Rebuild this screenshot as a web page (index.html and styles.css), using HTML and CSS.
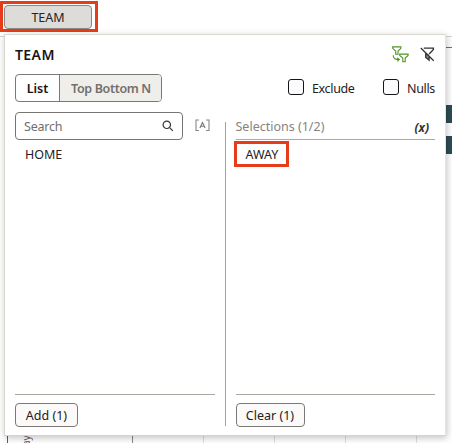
FILE: index.html
```
<!DOCTYPE html>
<html lang="en">
<head>
<meta charset="utf-8">
<title>Team filter</title>
<link rel="stylesheet" href="styles.css">
</head>
<body>
<div class="page">
  <header class="filter-bar"><div class="callout"><button class="chip"><span>TEAM</span></button></div></header>
  <main class="canvas">
    <div class="bars"><i></i><i></i></div>
    <div class="chart-foot"><span class="axis-label">ay</span><i class="g1"></i><i></i><i></i><i></i><i></i></div>
  </main>
  <section class="popup">
    <div class="head">
      <h1>TEAM</h1>
      <svg class="ic-link" width="17" height="17" viewBox="0 0 17 17"><path d="M.7 .9h8.2v1.4L6 5v3.2H3.7V5L.7 2.3zM7.7 8.1h8.4v1.3L13.2 12v3.8h-2.4V12L7.7 9.4zM1.2 9.2c0 2.9 1.8 4.4 5.9 4.4M5.3 11.8l2 1.8-2 1.8"/></svg>
      <svg class="ic-clear" width="15" height="15" viewBox="0 0 15 15"><path class="shade" d="M5.8 7h3v5.5l-3-2z"/><path d="M3.8 1.2h9.6v1.2L9.2 7M5.7 6.5v4l3.4 2.6V9.5M.8 1l12.9 12.8"/></svg>
    </div>
    <div class="options">
      <div class="toggle"><b class="on">List</b><b class="off">Top Bottom N</b></div>
      <label class="check exclude"><i></i><span>Exclude</span></label>
      <label class="check nulls"><i></i><span>Nulls</span></label>
    </div>
    <div class="columns">
      <div class="col">
        <div class="search-row">
          <div class="search"><span>Search</span><svg width="12" height="12" viewBox="0 0 12 12"><circle cx="4.8" cy="4.8" r="3.7"/><path d="M7.6 7.6l3.2 3.2"/></svg></div>
          <svg class="ic-match" width="15" height="13" viewBox="0 0 15 13"><path d="M4 1H1v10.5h3M11 1h3v10.5h-3"/><path class="a" d="M4.9 9L7.5 3.5 10.1 9M5.8 7.2h3.4"/></svg>
        </div>
        <div class="list"><div class="item">HOME</div></div>
        <button class="btn add"><span>Add (1)</span></button>
      </div>
      <div class="divider"></div>
      <div class="col right">
        <div class="sel-head"><span>Selections (1/2)</span><b>(x)</b></div>
        <div class="list"><div class="item callout-item">AWAY</div></div>
        <button class="btn clear"><span>Clear (1)</span></button>
      </div>
    </div>
  </section>
</div>
</body>
</html>
```
FILE: styles.css
```
* { box-sizing: border-box; }
body { margin: 0; background: #fff; color: #24211f; font: 12.5px/16px "Noto Sans", "Open Sans", sans-serif; }
button { font: inherit; color: inherit; padding: 0; display: block; }
span { white-space: nowrap; }
.page { position: relative; width: 452px; height: 443px; overflow: hidden; display: flex; flex-direction: column; }
.filter-bar { height: 37px; border-bottom: 1px solid #d4d2cc; padding: 1px 0 0; }
.callout { width: 98px; height: 31px; border: 3px solid #e73c19; padding: 1px 0 0 1px; }
.chip { width: 88px; height: 24px; padding-top: 1px; background: #dedcd8; border: 1px solid #8b8985; border-radius: 4px; }
.canvas { flex: 1; display: flex; flex-direction: column; justify-content: space-between; }
.bars { margin: 10px 0 0 50px; border-top: 1px solid #657b52; padding-top: 57px; display: flex; flex-direction: column; align-items: flex-end; gap: 13px; }
.bars i { width: 10px; height: 18px; background: #2d4d54; }
.chart-foot { height: 10px; display: flex; overflow: hidden; margin-left: 7px; border-left: 1px solid #4f693e; }
.axis-label { writing-mode: vertical-rl; transform: rotate(180deg); width: 16px; height: 11px; margin: 2px 0 0 10px; font-size: 10px; line-height: 16px; color: #555; flex: none; }
.chart-foot i { width: 1px; background: #dcdce2; flex: none; margin-left: 70px; }
.chart-foot .g1 { background: #888; margin-left: 98px; }
.popup { position: absolute; left: 4px; top: 34px; width: 442px; height: 402px; padding: 10px 10px 8px; background: #fff; border: 1px solid #d9d9d0; border-right-color: #e4e4e2; border-bottom-color: #d2d2d0; box-shadow: 1px 2px 7px rgba(0,0,0,.24); display: flex; flex-direction: column; }
.head { display: flex; height: 29px; }
h1 { margin: 1px auto 0 0; font-size: 14px; line-height: 18px; font-weight: 600; letter-spacing: .4px; color: #161513; }
svg { display: block; fill: none; flex: none; }
.ic-link { stroke: #509327; stroke-width: 1.1; margin: 1px 11px 0 0; }
.ic-clear { stroke: #363431; stroke-width: 1.3; margin: 2px 0 0; }
.ic-clear .shade { fill: #888; stroke: none; }
.options { display: flex; height: 38px; }
.toggle { display: flex; width: 147px; height: 28px; border: 1px solid #7b7975; border-radius: 4px; overflow: hidden; margin-right: auto; }
.toggle b { display: flex; align-items: center; justify-content: center; font-weight: 600; padding-top: 1px; }
.on { width: 44px; color: #161513; border-right: 1px solid #7b7975; }
.off { flex: 1; background: #f0eeeb; color: #72706d; letter-spacing: -.35px; padding-left: 1px; }
.check { display: flex; gap: 8px; height: 28px; align-items: center; letter-spacing: -.35px; }
.check span { padding-top: 1px; }
.check i { width: 16px; height: 16px; flex: none; margin-top: -2px; border: 1px solid #161513; border-radius: 3px; background: #fbfaff; }
.exclude { width: 95px; }
.nulls { width: 52px; }
.columns { flex: 1; display: flex; min-height: 0; }
.col { width: 200px; display: flex; flex-direction: column; }
.divider { width: 1px; background: #a4a29f; margin: 10px 10px 1px; }
.search-row { display: flex; align-items: center; height: 28px; }
.search { width: 168px; height: 28px; border: 1px solid #777571; border-radius: 4px; display: flex; align-items: center; justify-content: space-between; padding: 0 8px; color: #716f6b; }
.search span { padding-top: 2px; letter-spacing: -.2px; }
.search svg { stroke: #363431; stroke-width: 1.2; }
.ic-match { stroke: #8a8883; margin: -1px 0 0 12px; stroke-width: 1.1; }
.ic-match .a { stroke: #777570; }
.list { flex: 1; border-bottom: 1px solid #aaa7a0; }
.item { padding: 7px 10px 0; }
.sel-head { height: 28px; border-bottom: 1px solid #aaaaa6; display: flex; align-items: center; justify-content: space-between; padding: 3px 6px 0 0; color: #85837e; }
.sel-head b { font-size: 12px; font-weight: 700; font-style: italic; color: #363431; padding-top: 2px; }
.callout-item { width: 55px; height: 26px; margin: 1px 0 0 -2px; border: 3px solid #e73c19; padding: 3px 0 0 9px; }
.btn { height: 24px; padding-top: 1px; margin-top: 8px; border: 1px solid #7b7975; border-radius: 4px; background: #fbfaf8; }
.add { width: 63px; }
.clear { width: 69px; }
```
